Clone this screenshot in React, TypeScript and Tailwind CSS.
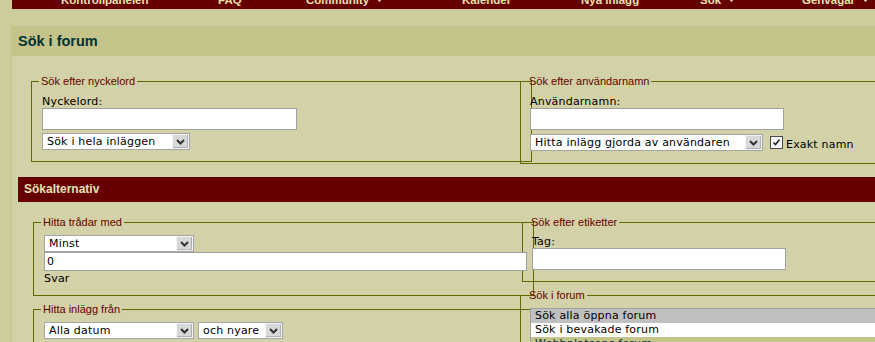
import React from "react";

const Chevron = () => (
  <svg width="9" height="6" viewBox="0 0 9 6">
    <path d="M1 1 L4.5 4.5 L8 1" stroke="#333333" strokeWidth="2" fill="none" />
  </svg>
);

function Sel({ text, className }: { text: string; className: string }) {
  return (
    <div className={`flex h-[17px] shrink-0 border border-[#a5a5a5] bg-white ${className}`}>
      <div className="flex-1 overflow-hidden whitespace-nowrap pl-[4px] text-[11px] leading-[15px] text-black">
        {text}
      </div>
      <div className="flex w-[17px] items-center justify-center border border-[#f4f4f4] bg-[#d8d8d8] shadow-[inset_-1px_-1px_0_#b0b0b0]">
        <Chevron />
      </div>
    </div>
  );
}

function NavItem({ label, w, arrow }: { label: string; w: string; arrow?: boolean }) {
  return (
    <div className={`flex shrink-0 items-start ${w}`}>
      <span className="mt-[-7px] whitespace-nowrap">{label}</span>
      {arrow && (
        <svg className="ml-[7px] mt-[-2px]" width="7" height="4" viewBox="0 0 7 4">
          <path d="M0 0H7L3.5 4Z" fill="#ece8b8" />
        </svg>
      )}
    </div>
  );
}

const legendCls =
  "px-[2px] font-['Liberation_Sans',Arial,sans-serif] text-[11px] leading-[13px] tracking-normal text-[#660000]";

export default function App() {
  return (
    <div className="h-[342px] w-[875px] overflow-hidden bg-[#cdcc9b] font-['DejaVu_Sans',Verdana,sans-serif] text-[11px] tracking-[0.2px] text-black">
      <nav className="ml-[12px] flex h-[9px] overflow-hidden bg-[#660000] pl-[49px] font-['Liberation_Sans',Arial,sans-serif] text-[11.5px] font-bold leading-[14px] tracking-normal text-[#e6e2b0]">
        <NavItem w="w-[157px]" label="Kontrollpanelen" />
        <NavItem w="w-[88px]" label="FAQ" />
        <NavItem w="w-[156px]" label="Community" arrow />
        <NavItem w="w-[119px]" label="Kalender" />
        <NavItem w="w-[119px]" label="Nya inlägg" />
        <NavItem w="w-[102px]" label="Sök" arrow />
        <NavItem w="w-[90px]" label="Genvägar" arrow />
      </nav>

      <div className="ml-[11px] mt-[17px] h-[30px] bg-[#c3c38a] pl-[7px] font-['Liberation_Sans',Arial,sans-serif] text-[14.5px] font-bold leading-[30px] tracking-normal text-[#003333]">
        Sök i forum
      </div>

      <div className="ml-[11px] h-[286px] border-l border-[#c3c38a] bg-[#d3d1a7]">
        {/* Row 1 */}
        <div className="flex items-start pt-[19px]">
          <fieldset className="ml-[19px] w-[501px] shrink-0 border border-[#666600]">
            <legend className={`ml-[7px] ${legendCls}`}>Sök efter nyckelord</legend>
            <div className="pb-[11px] pl-[10px]">
              <div className="mt-[7px] leading-[13px]">Nyckelord:</div>
              <input
                readOnly
                className="block h-[22px] w-[255px] border border-[#a0a0a0] bg-white px-[2px] outline-none"
              />
              <Sel className="mt-[3px] w-[148px]" text="Sök i hela inläggen" />
            </div>
          </fieldset>
          <fieldset className="ml-[-12px] w-[500px] shrink-0 border border-[#666600]">
            <legend className={`ml-[6px] ${legendCls}`}>Sök efter användarnamn</legend>
            <div className="pb-[12px] pl-[9px]">
              <div className="mt-[7px] leading-[13px]">Användarnamn:</div>
              <input
                readOnly
                className="block h-[22px] w-[254px] border border-[#a0a0a0] bg-white px-[2px] outline-none"
              />
              <div className="mt-[4px] flex items-center">
                <Sel className="w-[233px]" text="Hitta inlägg gjorda av användaren" />
                <span className="ml-[7px] flex h-[13px] w-[13px] shrink-0 items-center justify-center border border-[#4a4a4a] bg-[#f6f6f6]">
                  <svg width="9" height="9" viewBox="0 0 9 9">
                    <path d="M1.5 4.5 L3.5 6.5 L7.5 1.8" stroke="#222222" strokeWidth="1.6" fill="none" />
                  </svg>
                </span>
                <span className="ml-[3px] mt-[3px] whitespace-nowrap leading-[13px]">Exakt namn</span>
              </div>
            </div>
          </fieldset>
        </div>

        {/* Sökalternativ bar */}
        <div className="ml-[6px] mt-[13px] h-[25px] bg-[#660000] pl-[6px] font-['Liberation_Sans',Arial,sans-serif] text-[12px] font-bold leading-[25px] tracking-normal text-[#e6e2b0]">
          Sökalternativ
        </div>

        {/* Row 2 */}
        <div className="mt-[14px] flex items-start">
          <div className="ml-[21px] flex w-[501px] shrink-0 flex-col">
            <fieldset className="border border-[#666600]">
              <legend className={`ml-[7px] ${legendCls}`}>Hitta trådar med</legend>
              <div className="pb-[10px] pl-[10px]">
                <Sel className="mt-[6px] w-[150px]" text="Minst" />
                <input
                  readOnly
                  defaultValue="0"
                  className="relative z-10 block h-[19px] w-[483px] border border-[#a0a0a0] bg-white pl-[2px] leading-[15px] outline-none"
                />
                <div className="mt-[1px] leading-[13px]">Svar</div>
              </div>
            </fieldset>
            <fieldset className="mt-[7px] border border-[#666600]">
              <legend className={`ml-[7px] ${legendCls}`}>Hitta inlägg från</legend>
              <div className="flex gap-[4px] pb-[20px] pl-[10px] pt-[6px]">
                <Sel className="w-[150px]" text="Alla datum" />
                <Sel className="w-[85px]" text="och nyare" />
              </div>
            </fieldset>
          </div>

          <div className="ml-[-14px] flex w-[500px] shrink-0 flex-col">
            <fieldset className="ml-[2px] border border-[#666600]">
              <legend className={`ml-[6px] ${legendCls}`}>Sök efter etiketter</legend>
              <div className="pb-[11px] pl-[9px]">
                <div className="mt-[6px] leading-[13px]">Tag:</div>
                <input
                  readOnly
                  className="block h-[22px] w-[254px] border border-[#a0a0a0] bg-white px-[2px] outline-none"
                />
              </div>
            </fieldset>
            <fieldset className="mt-[7px] border border-[#666600]">
              <legend className={`ml-[6px] ${legendCls}`}>Sök i forum</legend>
              <div className="pb-[10px] pl-[9px] pt-[6px]">
                <div className="w-[420px] border border-[#a0a0a0] bg-white">
                  <div className="h-[14px] bg-[#c0c0c0] pl-[4px] leading-[14px]">Sök alla öppna forum</div>
                  <div className="h-[14px] bg-white pl-[4px] leading-[14px]">Sök i bevakade forum</div>
                  <div className="h-[14px] bg-[#c3c38a] pl-[4px] leading-[14px] text-[#003333]">Webbplatsens forum</div>
                  <div className="h-[14px] bg-white pl-[4px] leading-[14px]">Allmänt</div>
                </div>
              </div>
            </fieldset>
          </div>
        </div>
      </div>
    </div>
  );
}
